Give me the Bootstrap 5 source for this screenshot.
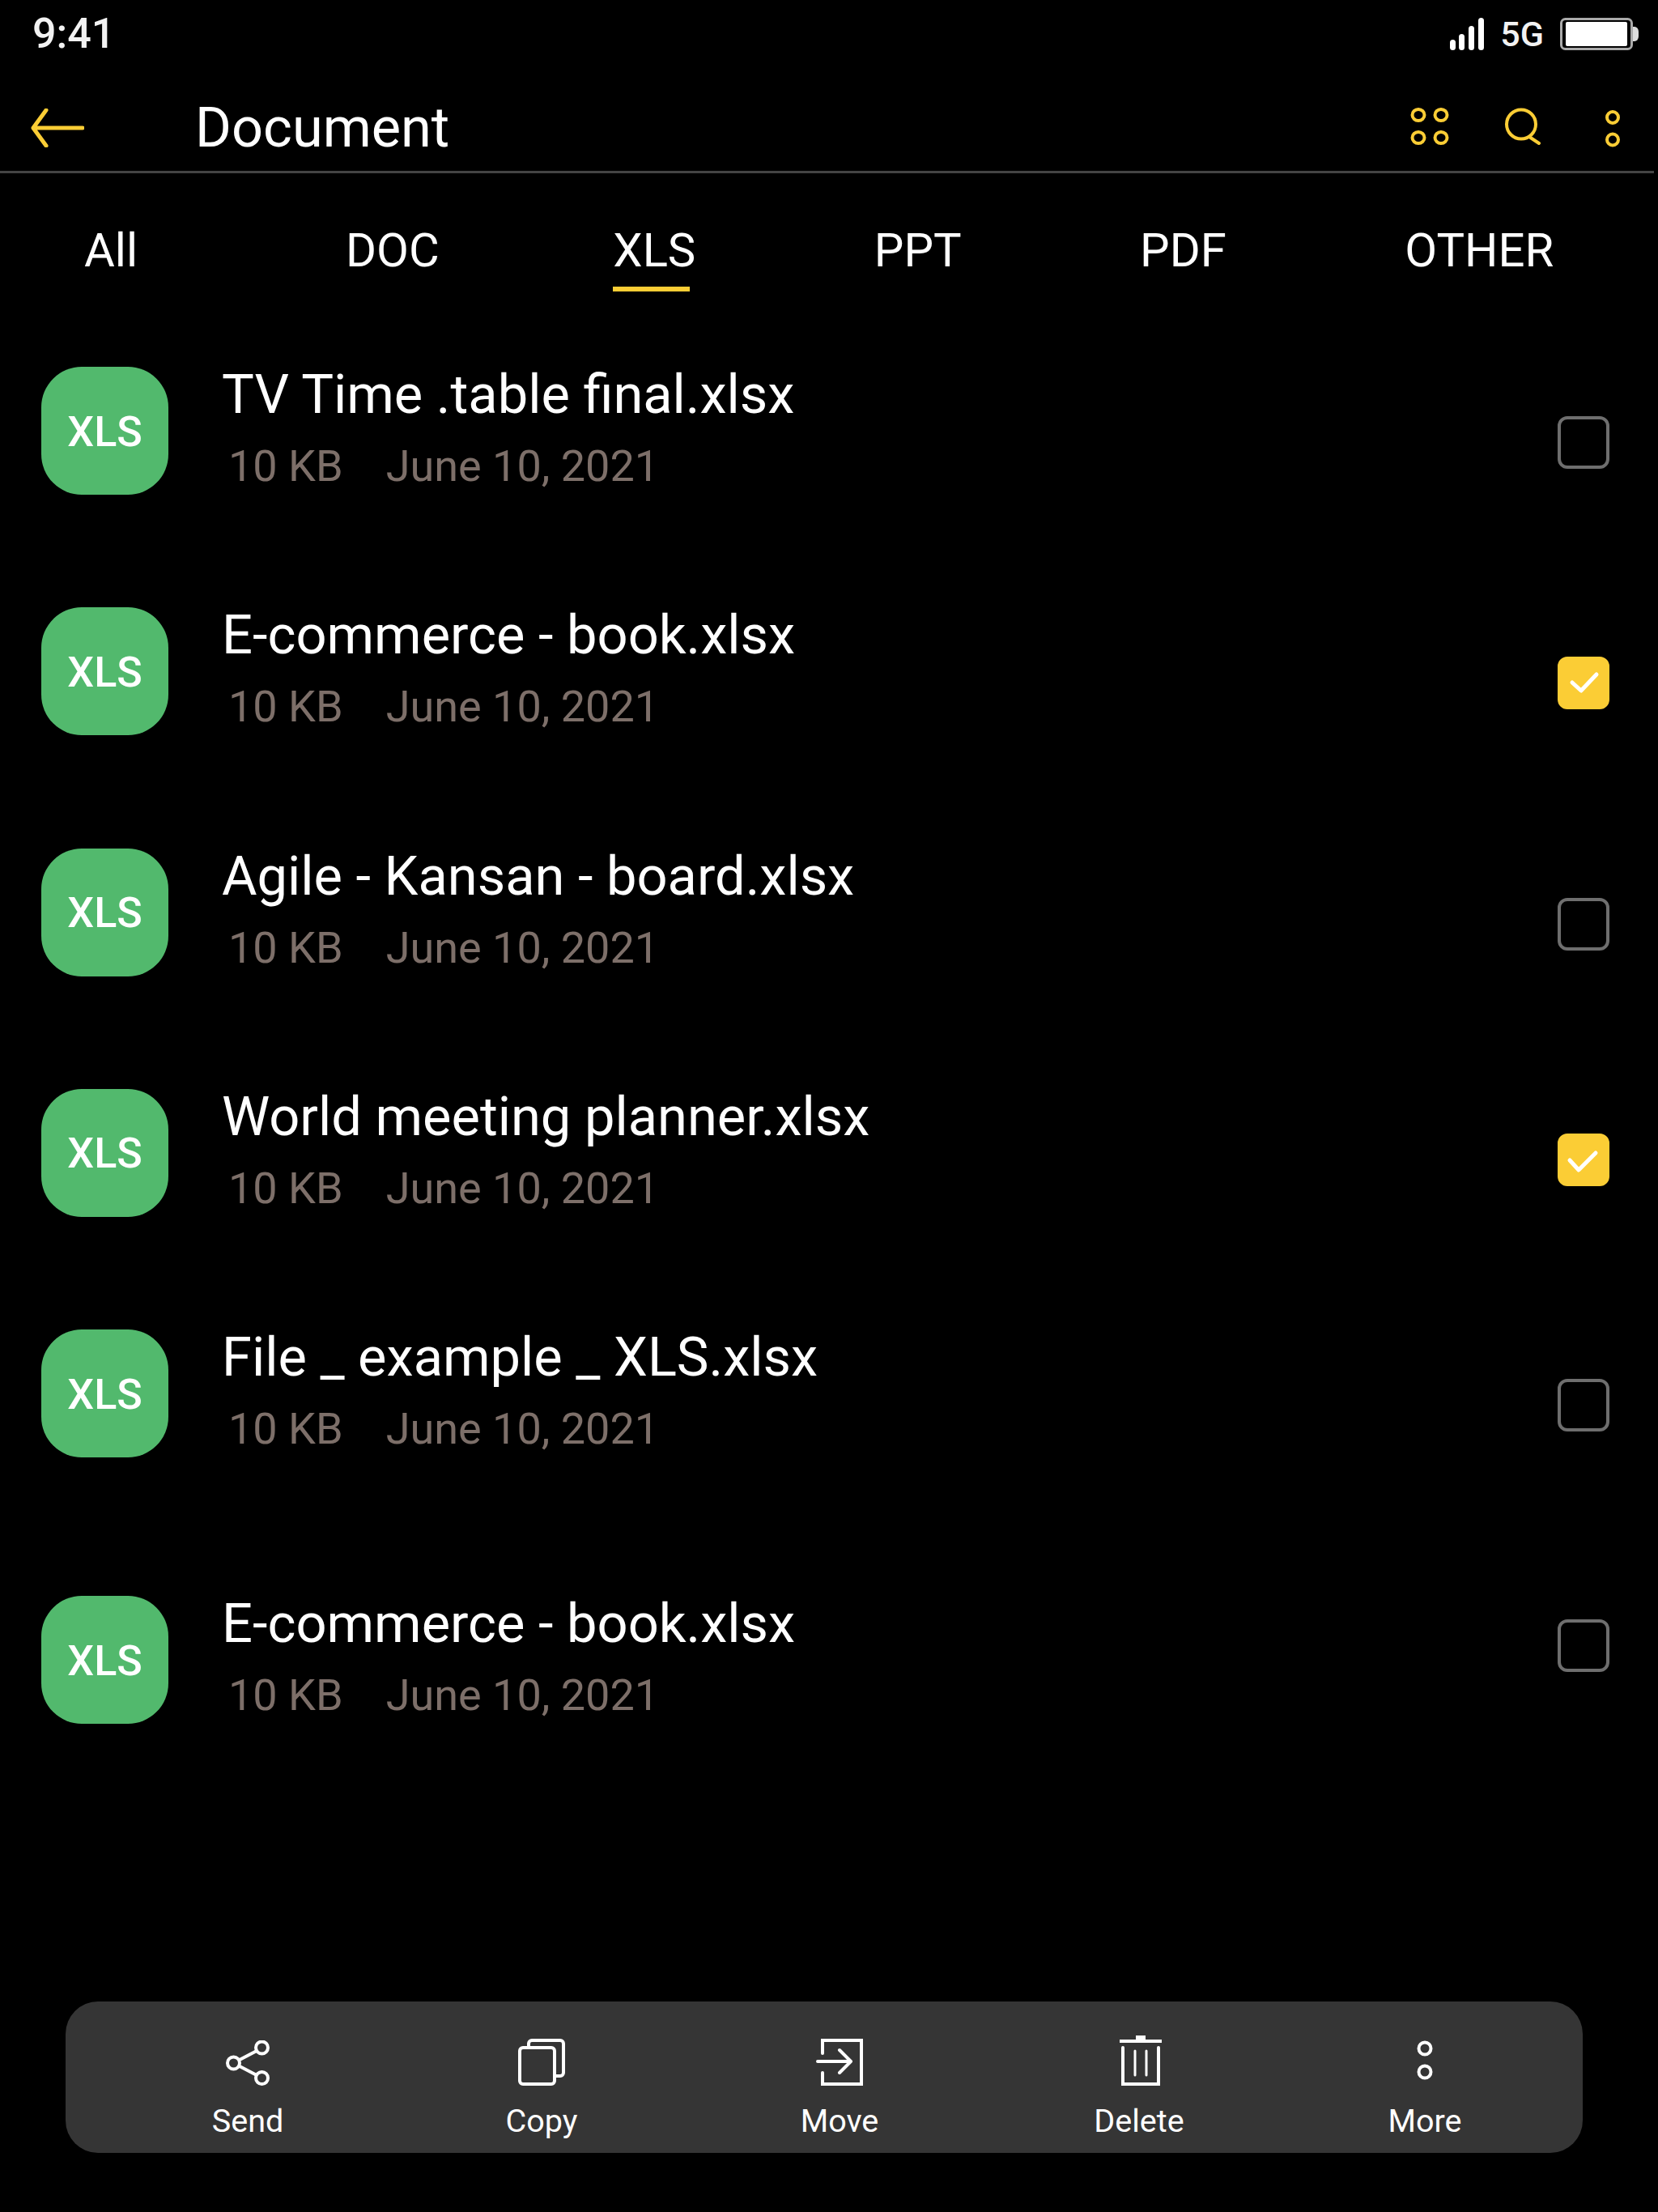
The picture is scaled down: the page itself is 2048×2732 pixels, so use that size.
<!DOCTYPE html>
<html lang="en">
<head>
  <meta charset="UTF-8">
  <meta name="viewport" content="width=device-width, initial-scale=1.0">
  <title>Document</title>
  <link href="https://cdn.jsdelivr.net/npm/bootstrap@5.3.0/dist/css/bootstrap.min.css" rel="stylesheet">
  <style>
    body { background: #000; color: #fff; font-family: Roboto, "Liberation Sans", sans-serif; }
    .page { width: 2048px; }
    .status-row { height: 74px; padding: 10px 24px 0 40px; }
    .clock { font-size: 52px; font-weight: 500; line-height: 60px; color: #f2f2f2; }
    .net { margin: 0 20px; font-size: 43px; font-weight: 500; line-height: 50px; color: #f2f2f2; }
    .top-row { height: 140px; margin-right: 5px; border-bottom: 3px solid #444; padding: 31px 42px 0 38px; }
    .top-title { font-size: 68.5px; font-weight: 400; line-height: 80px; margin: 0 0 0 137px; }
    .top-gap1 { gap: 69px; margin-bottom: 5px; }
    .top-gap2 { margin-left: 80px; }
    .tab-row { padding-left: 104px; gap: 220.5px; }
    .tab-row .nav-link { position: relative; color: #fff; font-size: 58px; line-height: 68px; padding: 61px 0 17px; }
    .tab-row .first-tab { margin-right: 36.5px; }
    .tab-row .xls-tab { margin-left: -6px; }
    .tab-row .nav-link.active::after { content: ""; position: absolute; left: 0; bottom: 0; width: 95px; height: 6px; background: #fbcd35; }
    .file-list { padding-top: 88px; --bs-list-group-bg: #000; --bs-list-group-color: #fff; --bs-list-group-border-width: 0; border-radius: 0; }
    .file-list .list-group-item { height: 297.3px; padding: 0 60px 0 51px; }
    .file-list .last-row { margin-top: 32px; }
    .xls-tile { width: 157px; height: 158px; margin-top: 5px; padding-top: 3px; border-radius: 50px; background: #52b96d; font-size: 52px; font-weight: 500; }
    .file-text { margin-left: 66px; padding-top: 1px; }
    .file-name { font-size: 66.8px; line-height: 76px; }
    .file-meta { margin: 20px 0 0 8px; gap: 53px; font-size: 54px; line-height: 62px; color: #7d6f69; }
    .tick { width: 64px; height: 65px; margin-top: 66px; border: 4px solid #6e6e6e; border-radius: 12px; }
    .tick.on { background: #fbcd35; border-color: #fbcd35; }
    .tick.up1 { margin-top: 60px; }
    .tick.up2 { margin-top: 34px; }
    .action-bar { height: 187px; margin: auto 93px 73px 81px; padding: 42px 0 0 43px; background: #353535; border-radius: 40px; display: grid; grid-template-columns: 364px 362px 374px 366px 340px; }
    .action-icon { height: 62px; }
    .action-icon.more-ic { padding-bottom: 6px; }
    .action-icon.bin-ic { margin-left: 4px; }
    .action-label { margin-top: 22px; font-size: 39.5px; line-height: 44px; }
    svg { display: block; fill: none; }
    .ic-y { stroke: #fbcd35; stroke-width: 4; }
    .ic-w { stroke: #fff; stroke-width: 4; }
  </style>
</head>
<body>
  <div class="page d-flex flex-column min-vh-100">
    <div class="status-row d-flex align-items-center">
      <span class="clock">9:41</span>
      <svg class="ms-auto" width="42" height="40" viewBox="0 0 42 40"><g fill="#fff"><rect x="0" y="27" width="7" height="13" rx="3.5"/><rect x="11" y="20" width="7" height="20" rx="3.5"/><rect x="23" y="10" width="7" height="30" rx="3.5"/><rect x="35" y="0" width="7" height="40" rx="3.5"/></g></svg>
      <span class="net">5G</span>
      <svg width="97" height="40" viewBox="0 0 97 40"><rect x="1.5" y="1.5" width="87" height="37" rx="5" stroke="#aaa" stroke-width="3"/><rect x="7" y="5" width="76" height="30" rx="2" fill="#fff"/><path d="M90 11h2a5 6 0 0 1 5 6v6a5 6 0 0 1-5 6h-2z" fill="#ddd"/></svg>
    </div>

    <div class="top-row d-flex align-items-center">
      <svg width="66" height="48" viewBox="0 0 66 48" stroke="#fbcd35" stroke-width="5" stroke-linecap="round" stroke-linejoin="round"><path d="M64 24H3M19 2 3 24l16 22"/></svg>
      <h1 class="top-title">Document</h1>
      <div class="ms-auto d-flex align-items-center">
        <div class="d-flex align-items-center top-gap1">
          <svg class="ic-y" width="48" height="46" viewBox="0 0 48 46"><ellipse cx="10" cy="9" rx="7.5" ry="7"/><ellipse cx="38" cy="9" rx="7.5" ry="7"/><ellipse cx="10" cy="37" rx="7.5" ry="7"/><ellipse cx="38" cy="37" rx="7.5" ry="7"/></svg>
          <svg class="ic-y" width="44" height="46" viewBox="0 0 44 46" stroke-linecap="round"><circle cx="20" cy="20.500" r="18"/><path d="M30 36l12 8"/></svg>
        </div>
        <svg class="ic-y top-gap2" width="18" height="47" viewBox="0 0 18 47"><circle cx="9" cy="10" r="7"/><circle cx="9" cy="37.500" r="7"/></svg>
      </div>
    </div>

    <ul class="nav tab-row">
      <li class="nav-item"><a class="nav-link first-tab" href="#">All</a></li>
      <li class="nav-item"><a class="nav-link" href="#">DOC</a></li>
      <li class="nav-item xls-tab"><a class="nav-link active" href="#">XLS</a></li>
      <li class="nav-item"><a class="nav-link" href="#">PPT</a></li>
      <li class="nav-item"><a class="nav-link" href="#">PDF</a></li>
      <li class="nav-item"><a class="nav-link" href="#">OTHER</a></li>
    </ul>

    <div class="list-group list-group-flush file-list">
      <div class="list-group-item d-flex align-items-start">
        <div class="xls-tile d-flex align-items-center justify-content-center">XLS</div>
        <div class="file-text">
          <div class="file-name">TV Time .table final.xlsx</div>
          <div class="file-meta d-flex"><span>10 KB</span><span>June 10, 2021</span></div>
        </div>
        <span class="tick ms-auto"></span>
      </div>
      <div class="list-group-item d-flex align-items-start">
        <div class="xls-tile d-flex align-items-center justify-content-center">XLS</div>
        <div class="file-text">
          <div class="file-name">E-commerce - book.xlsx</div>
          <div class="file-meta d-flex"><span>10 KB</span><span>June 10, 2021</span></div>
        </div>
        <span class="tick on ms-auto"><svg width="56" height="57" viewBox="0 0 56 57" stroke="#fff" stroke-width="5" stroke-linecap="round" stroke-linejoin="round"><path d="M14 28l11 10 19-20"/></svg></span>
      </div>
      <div class="list-group-item d-flex align-items-start">
        <div class="xls-tile d-flex align-items-center justify-content-center">XLS</div>
        <div class="file-text">
          <div class="file-name">Agile - Kansan - board.xlsx</div>
          <div class="file-meta d-flex"><span>10 KB</span><span>June 10, 2021</span></div>
        </div>
        <span class="tick ms-auto"></span>
      </div>
      <div class="list-group-item d-flex align-items-start">
        <div class="xls-tile d-flex align-items-center justify-content-center">XLS</div>
        <div class="file-text">
          <div class="file-name">World meeting planner.xlsx</div>
          <div class="file-meta d-flex"><span>10 KB</span><span>June 10, 2021</span></div>
        </div>
        <span class="tick on up1 ms-auto"><svg width="56" height="57" viewBox="0 0 56 57" stroke="#fff" stroke-width="5" stroke-linecap="round" stroke-linejoin="round"><path d="M11 29l11 12 21-21"/></svg></span>
      </div>
      <div class="list-group-item d-flex align-items-start">
        <div class="xls-tile d-flex align-items-center justify-content-center">XLS</div>
        <div class="file-text">
          <div class="file-name">File _ example _ XLS.xlsx</div>
          <div class="file-meta d-flex"><span>10 KB</span><span>June 10, 2021</span></div>
        </div>
        <span class="tick ms-auto"></span>
      </div>
      <div class="list-group-item last-row d-flex align-items-start">
        <div class="xls-tile d-flex align-items-center justify-content-center">XLS</div>
        <div class="file-text">
          <div class="file-name">E-commerce - book.xlsx</div>
          <div class="file-meta d-flex"><span>10 KB</span><span>June 10, 2021</span></div>
        </div>
        <span class="tick up2 ms-auto"></span>
      </div>
    </div>

    <div class="action-bar">
      <div class="d-flex flex-column align-items-center">
        <div class="action-icon d-flex align-items-end"><svg class="ic-w" width="54" height="56" viewBox="0 0 54 56"><circle cx="44.500" cy="9" r="7.500"/><circle cx="9.500" cy="28" r="7.500"/><circle cx="44.500" cy="46.500" r="7.500"/><path d="M16 24.500 38 13M16 31.500l22 11.500"/></svg></div>
        <div class="action-label">Send</div>
      </div>
      <div class="d-flex flex-column align-items-center">
        <div class="action-icon d-flex align-items-end"><svg class="ic-w" width="58" height="58" viewBox="0 0 58 58"><rect x="2" y="11" width="43" height="45" rx="4"/><path d="M13 11V6a4 4 0 0 1 4-4h35a4 4 0 0 1 4 4v36a4 4 0 0 1-4 4h-7"/></svg></div>
        <div class="action-label">Copy</div>
      </div>
      <div class="d-flex flex-column align-items-center">
        <div class="action-icon d-flex align-items-end"><svg class="ic-w" width="58" height="58" viewBox="0 0 58 58"><path d="M8 18V2h48v54H8V42" stroke-linecap="round"/><path d="M2 28h41M29 14l14 14-14 14" stroke-linecap="round" stroke-linejoin="round"/></svg></div>
        <div class="action-label">Move</div>
      </div>
      <div class="d-flex flex-column align-items-center">
        <div class="action-icon bin-ic d-flex align-items-end"><svg class="ic-w" width="52" height="62" viewBox="0 0 52 62"><path d="M0 7h52" stroke-width="4"/><path d="M20 0h12v6H20z" fill="#fff" stroke="none"/><path d="M4 15v45h44V15" stroke-linecap="round"/><path d="M19 19v30M33 19v30" stroke-width="3" stroke-linecap="round"/></svg></div>
        <div class="action-label">Delete</div>
      </div>
      <div class="d-flex flex-column align-items-center">
        <div class="action-icon more-ic d-flex align-items-end"><svg class="ic-w" width="20" height="50" viewBox="0 0 20 50" stroke-width="4"><circle cx="10" cy="10" r="7.500"/><circle cx="10" cy="39" r="7.500"/></svg></div>
        <div class="action-label">More</div>
      </div>
    </div>
  </div>
</body>
</html>
